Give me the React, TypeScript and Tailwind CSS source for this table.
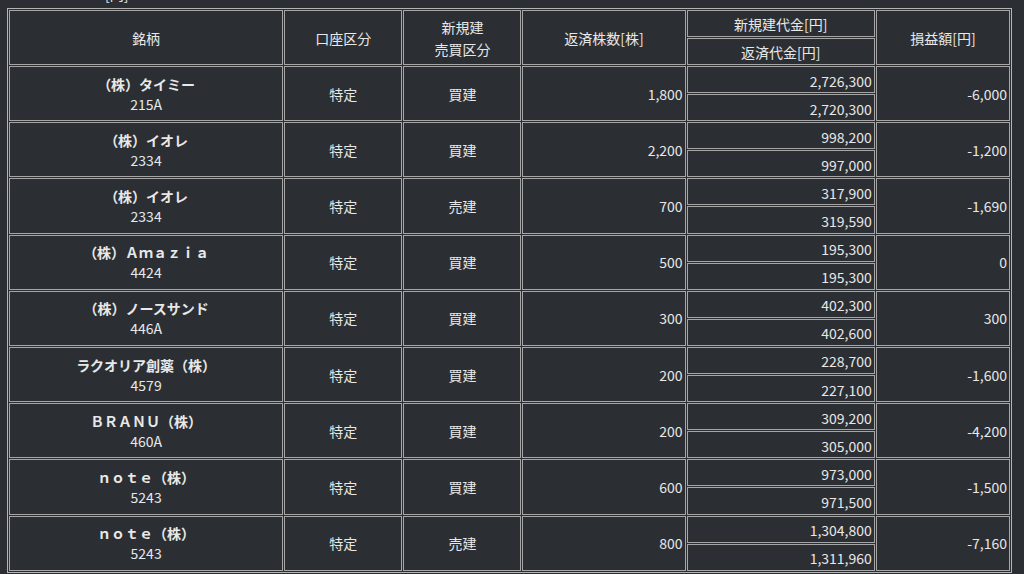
import React from "react";

type Row = {
  name: string;
  code: string;
  acct: string;
  side: string;
  qty: string;
  open: string;
  close: string;
  pl: string;
};

const rows: Row[] = [
  { name: "（株）タイミー", code: "215A", acct: "特定", side: "買建", qty: "1,800", open: "2,726,300", close: "2,720,300", pl: "-6,000" },
  { name: "（株）イオレ", code: "2334", acct: "特定", side: "買建", qty: "2,200", open: "998,200", close: "997,000", pl: "-1,200" },
  { name: "（株）イオレ", code: "2334", acct: "特定", side: "売建", qty: "700", open: "317,900", close: "319,590", pl: "-1,690" },
  { name: "（株）Ａｍａｚｉａ", code: "4424", acct: "特定", side: "買建", qty: "500", open: "195,300", close: "195,300", pl: "0" },
  { name: "（株）ノースサンド", code: "446A", acct: "特定", side: "買建", qty: "300", open: "402,300", close: "402,600", pl: "300" },
  { name: "ラクオリア創薬（株）", code: "4579", acct: "特定", side: "買建", qty: "200", open: "228,700", close: "227,100", pl: "-1,600" },
  { name: "ＢＲＡＮＵ（株）", code: "460A", acct: "特定", side: "買建", qty: "200", open: "309,200", close: "305,000", pl: "-4,200" },
  { name: "ｎｏｔｅ（株）", code: "5243", acct: "特定", side: "買建", qty: "600", open: "973,000", close: "971,500", pl: "-1,500" },
  { name: "ｎｏｔｅ（株）", code: "5243", acct: "特定", side: "売建", qty: "800", open: "1,304,800", close: "1,311,960", pl: "-7,160" },
];

const cell = "border border-[#a6a6a6] p-0 align-middle";

export default function App() {
  return (
    <div
      className="w-[1024px] h-[574px] overflow-hidden bg-[#2b2f33] text-[#e8e8e8] text-[14px]"
      style={{ fontFamily: '"Noto Sans CJK JP", "Noto Sans", sans-serif' }}
    >
      <div className="h-[8px] overflow-hidden">
        <div className="-mt-[16px] pl-[105px] leading-[20px]">[円]</div>
      </div>
      <table
        className="ml-[7px] w-[1005px] table-fixed border-separate border-spacing-[1px] border border-[#b4b4b4] leading-[20px]"
      >
        <colgroup>
          <col className="w-[274px]" />
          <col className="w-[118px]" />
          <col className="w-[118px]" />
          <col className="w-[163px]" />
          <col className="w-[188px]" />
          <col className="w-[134px]" />
        </colgroup>
        <thead>
          <tr className="h-[27px]">
            <th rowSpan={2} className={`${cell} font-normal text-center`}>銘柄</th>
            <th rowSpan={2} className={`${cell} font-normal text-center`}>口座区分</th>
            <th rowSpan={2} className={`${cell} font-normal text-center leading-[22px]`}>
              新規建
              <br />
              売買区分
            </th>
            <th rowSpan={2} className={`${cell} font-normal text-center`}>返済株数[株]</th>
            <th className={`${cell} font-normal text-center h-[27px]`}>新規建代金[円]</th>
            <th rowSpan={2} className={`${cell} font-normal text-center`}>損益額[円]</th>
          </tr>
          <tr className="h-[27px]">
            <th className={`${cell} font-normal text-center h-[27px]`}>返済代金[円]</th>
          </tr>
        </thead>
        <tbody>
          {rows.map((r, i) => (
            <React.Fragment key={i}>
              <tr>
                <td rowSpan={2} className={`${cell} text-center`}>
                  <div className="font-bold">{r.name}</div>
                  <div>{r.code}</div>
                </td>
                <td rowSpan={2} className={`${cell} text-center`}>{r.acct}</td>
                <td rowSpan={2} className={`${cell} text-center`}>{r.side}</td>
                <td rowSpan={2} className={`${cell} text-right pr-[2px]`}>{r.qty}</td>
                <td className={`${cell} text-right pr-[2px] h-[27.1px] pt-[2px]`}>{r.open}</td>
                <td rowSpan={2} className={`${cell} text-right pr-[2px]`}>{r.pl}</td>
              </tr>
              <tr>
                <td className={`${cell} text-right pr-[2px] h-[27.1px] pt-[2px]`}>{r.close}</td>
              </tr>
            </React.Fragment>
          ))}
        </tbody>
      </table>
    </div>
  );
}
